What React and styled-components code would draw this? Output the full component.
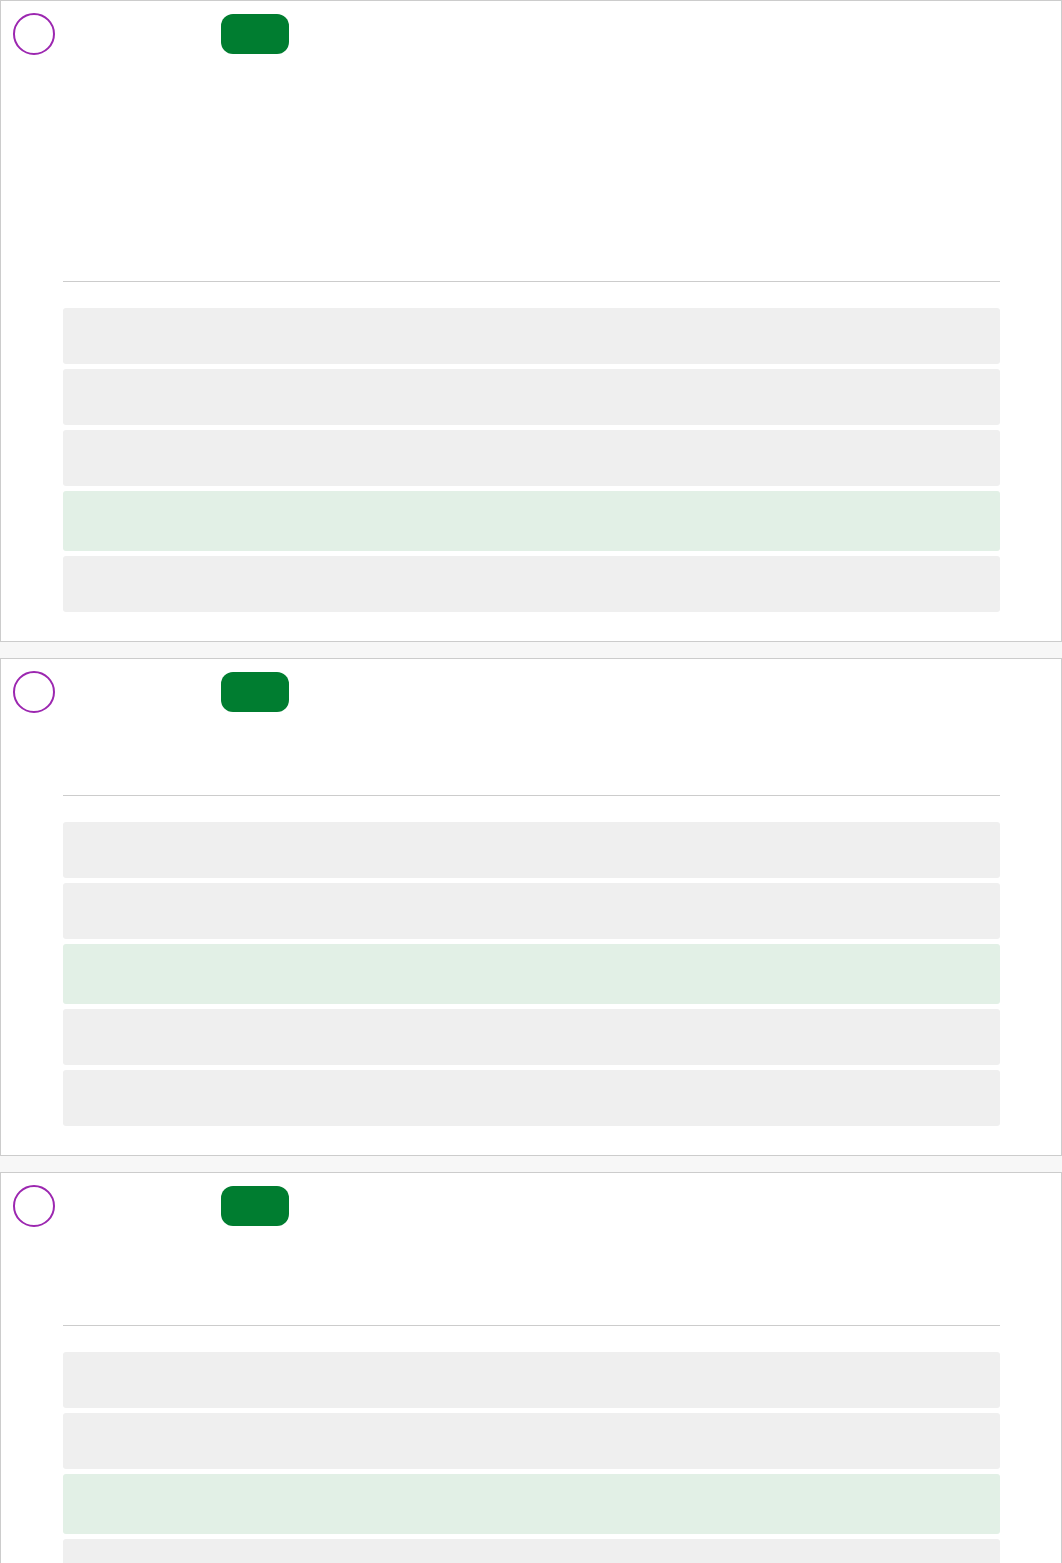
import styled, { createGlobalStyle } from "styled-components";

const GlobalStyle = createGlobalStyle`
  html, body {
    margin: 0;
    padding: 0;
    background: #f7f7f7;
    font-family: "Roboto", "Liberation Sans", sans-serif;
  }
  * {
    box-sizing: border-box;
  }
`;

const questions = [
  { id: 1, bodyHeight: 226, options: 5, correct: 3 },
  { id: 2, bodyHeight: 82, options: 5, correct: 2 },
  { id: 3, bodyHeight: 98, options: 5, correct: 2 },
];

const App = () => {
  return (
    <Page>
      <GlobalStyle />
      {questions.map((q) => (
        <Card key={q.id}>
          <Header>
            <Marker />
            <Badge />
          </Header>
          <QuestionBody $height={q.bodyHeight} />
          <Answers>
            <Divider />
            <OptionList>
              {[...Array(q.options).keys()].map((i) => (
                <Option key={i} $correct={i === q.correct} />
              ))}
            </OptionList>
          </Answers>
        </Card>
      ))}
    </Page>
  );
};

const Page = styled.div`
  display: flex;
  flex-direction: column;
  gap: 16px;
`;

const Card = styled.div`
  background: #fff;
  border: 1px solid #cccccc;
  padding: 12px 12px 29px;
`;

const Header = styled.div`
  display: flex;
  align-items: center;
  height: 42px;
`;

const Marker = styled.div`
  width: 42px;
  height: 42px;
  border-radius: 50%;
  border: 2px solid #9c27b0;
  flex-shrink: 0;
`;

const Badge = styled.div`
  width: 68px;
  height: 40px;
  margin-left: 166px;
  border-radius: 12px;
  background: #007d30;
`;

const QuestionBody = styled.div`
  height: ${(p) => p.$height}px;
`;

const Answers = styled.div`
  margin: 0 49px 0 50px;
`;

const Divider = styled.div`
  height: 1px;
  background: #cccccc;
  margin-bottom: 26px;
`;

const OptionList = styled.div`
  display: flex;
  flex-direction: column;
  gap: 5px;
`;

const Option = styled.div`
  height: ${(p) => (p.$correct ? 60 : 56)}px;
  border-radius: 3px;
  background: ${(p) => (p.$correct ? "#e2f0e6" : "#efefef")};
`;

export default App;
